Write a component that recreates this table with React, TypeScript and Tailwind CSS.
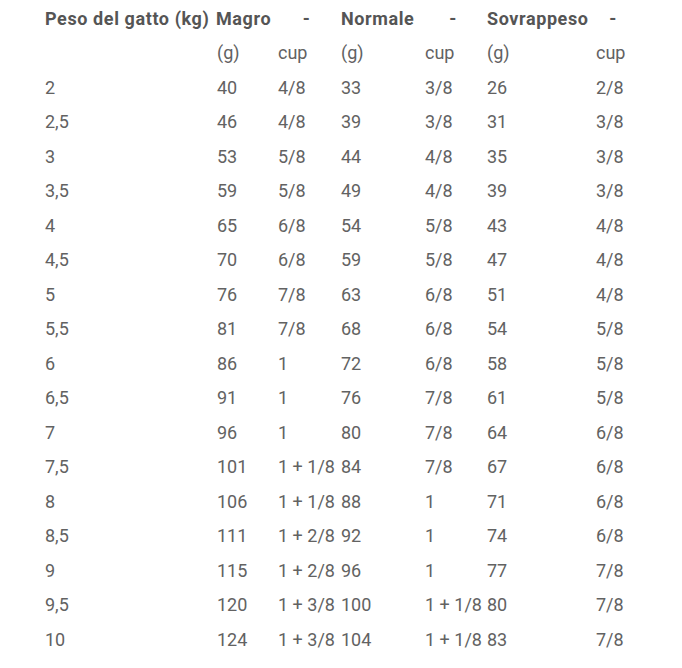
const header = ["Peso del gatto (kg)", "Magro", "-", "Normale", "-", "Sovrappeso", "-"];
const sub = ["", "(g)", "cup", "(g)", "cup", "(g)", "cup"];

const rows: string[][] = [
  ["2", "40", "4/8", "33", "3/8", "26", "2/8"],
  ["2,5", "46", "4/8", "39", "3/8", "31", "3/8"],
  ["3", "53", "5/8", "44", "4/8", "35", "3/8"],
  ["3,5", "59", "5/8", "49", "4/8", "39", "3/8"],
  ["4", "65", "6/8", "54", "5/8", "43", "4/8"],
  ["4,5", "70", "6/8", "59", "5/8", "47", "4/8"],
  ["5", "76", "7/8", "63", "6/8", "51", "4/8"],
  ["5,5", "81", "7/8", "68", "6/8", "54", "5/8"],
  ["6", "86", "1", "72", "6/8", "58", "5/8"],
  ["6,5", "91", "1", "76", "7/8", "61", "5/8"],
  ["7", "96", "1", "80", "7/8", "64", "6/8"],
  ["7,5", "101", "1 + 1/8", "84", "7/8", "67", "6/8"],
  ["8", "106", "1 + 1/8", "88", "1", "71", "6/8"],
  ["8,5", "111", "1 + 2/8", "92", "1", "74", "6/8"],
  ["9", "115", "1 + 2/8", "96", "1", "77", "7/8"],
  ["9,5", "120", "1 + 3/8", "100", "1 + 1/8", "80", "7/8"],
  ["10", "124", "1 + 3/8", "104", "1 + 1/8", "83", "7/8"],
];

const grid = "grid grid-cols-[172px_61px_63px_84px_62px_109px_40px] h-[34.5px] items-center";

export default function App() {
  return (
    <div className="min-h-[668px] w-[682px] bg-white pl-[45px] pt-[1px] text-[18px] text-[#626262] font-['Roboto',sans-serif]">
      {/* Header */}
      <div className={grid + " font-bold tracking-[0.6px] text-[#555555]"}>
        {header.map((h, i) => (
          <span
            key={i}
            className={"whitespace-nowrap " + (i === 1 ? "-ml-[1px] " : "") + (h === "-" ? "text-center pr-[6px]" : "")}
          >
            {h}
          </span>
        ))}
      </div>
      <div className={grid}>
        {sub.map((s, i) => (
          <span key={i} className="whitespace-nowrap">{s}</span>
        ))}
      </div>

      {rows.map((r) => (
        <div key={r[0]} className={grid}>
          {r.map((c, i) => (
            <span key={i} className="whitespace-nowrap">{c}</span>
          ))}
        </div>
      ))}
    </div>
  );
}
